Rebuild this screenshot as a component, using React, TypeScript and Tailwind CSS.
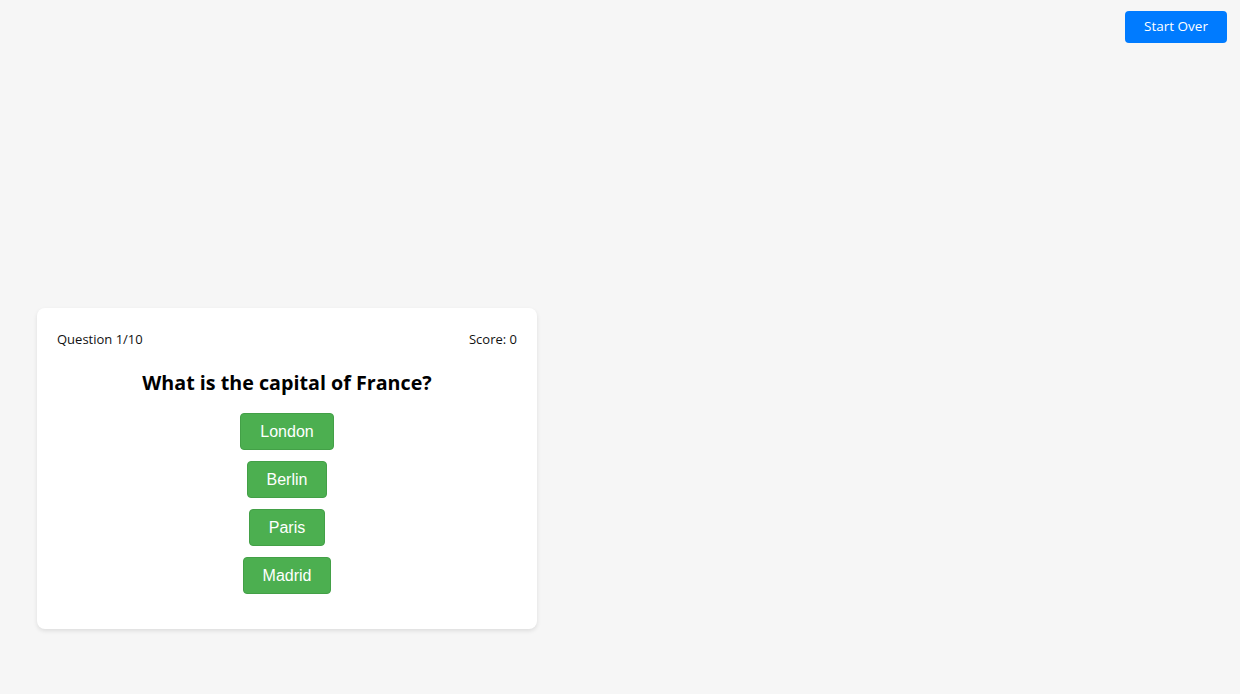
export default function App() {
  const opts = ["London", "Berlin", "Paris", "Madrid"];
  return (
    <div className="min-h-[694px] w-full bg-[#f6f6f6] flex flex-col" style={{ fontFamily: '"Open Sans", "Noto Sans", sans-serif' }}>
      <div className="flex justify-end pt-[11px] pr-[13px]">
        <button className="h-[32px] w-[102px] rounded-[4px] bg-[#007bff] text-white text-[13.5px] leading-none">Start Over</button>
      </div>
      <div className="mt-[265px] ml-[37px] w-[500px] bg-white rounded-[8px] shadow-[0_2px_4px_rgba(0,0,0,0.1)] px-[20px] pt-[22px] pb-[35px]">
        <div className="flex justify-between text-[13px] text-[#111] leading-[18px]">
          <span>Question 1/10</span>
          <span>Score: 0</span>
        </div>
        <h2 className="mt-[21px] text-center text-[19.7px] font-bold text-black leading-[28px]">What is the capital of France?</h2>
        <div className="mt-[16px] flex flex-col items-center gap-[11px]">
          {opts.map((o) => (
            <button key={o} className="h-[37px] px-[19px] rounded-[4px] bg-[#4caf50] border border-[#43a047] text-white text-[16px]" style={{ fontFamily: '"Liberation Sans", Arial, sans-serif' }}>
              {o}
            </button>
          ))}
        </div>
      </div>
    </div>
  );
}
